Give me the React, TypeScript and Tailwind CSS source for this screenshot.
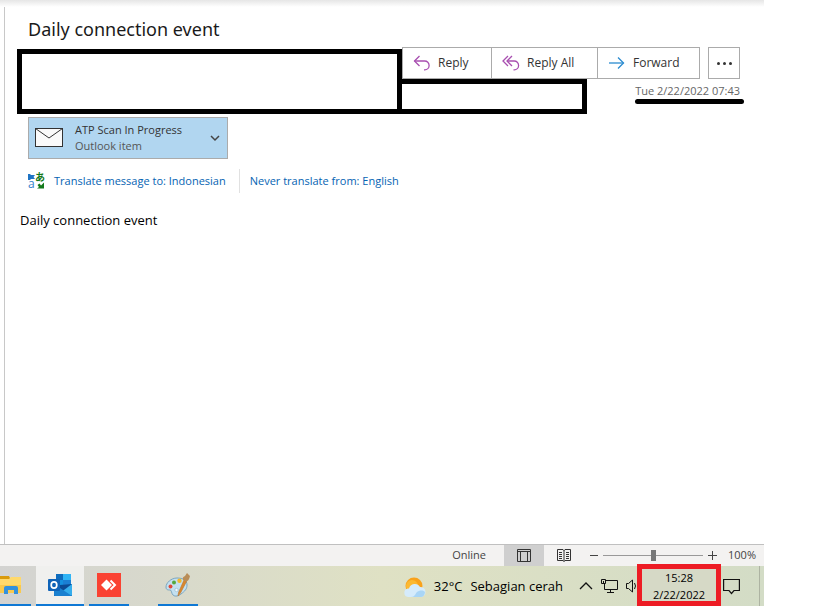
import React, { useState } from 'react';

const ReplyIcon: React.FC = () => (
  <svg width="18" height="16" viewBox="0 0 18 16" fill="none" stroke="#a84fb0" strokeWidth="1.3">
    <path d="M6.5 1 1.5 6l5 5" />
    <path d="M1.5 6h10.2a4.4 4.4 0 0 1 0 8.8h-.7" />
  </svg>
);

const ReplyAllIcon: React.FC = () => (
  <svg width="18" height="16" viewBox="0 0 18 16" fill="none" stroke="#a84fb0" strokeWidth="1.3">
    <path d="M6 1 1 6l5 5" />
    <path d="M10 1 5 6l5 5" />
    <path d="M5 6h7.2a4.2 4.2 0 0 1 0 8.8h-.7" />
  </svg>
);

const ForwardIcon: React.FC = () => (
  <svg width="18" height="16" viewBox="0 0 18 16" fill="none" stroke="#2b8bd0" strokeWidth="1.3">
    <path d="M1 8h14.5" />
    <path d="M10 2.5 15.5 8 10 13.5" />
  </svg>
);

const MailIcon: React.FC = () => (
  <svg width="28" height="20" viewBox="0 0 28 20" fill="#fafafa" stroke="#333" strokeWidth="1">
    <rect x=".5" y=".5" width="27" height="18" />
    <path d="M.5.5 14 10 27.5.5" fill="none" />
  </svg>
);

const TranslateIcon: React.FC = () => (
  <svg width="18" height="18" viewBox="0 0 18 18" className="overflow-visible">
    <path d="M0 2h2l1 1h4L5.500 5 7 7H3L2 8H0z" fill="#1f74c4" />
    <path d="M16 10.500v6H9l2-1.500-1.500-2 2-1.500 1.500 2z" fill="#13791b" />
    <text x="0" y="16" fontSize="12" fill="#2f7fc9" className="font-['Open_Sans',sans-serif]">a</text>
    <text x="7" y="9" fontSize="10" fontWeight="700" fill="#13791b" className="font-['Noto_Sans_CJK_JP',sans-serif]">あ</text>
  </svg>
);

const ReadingLayoutIcon: React.FC = () => (
  <svg width="14" height="13" viewBox="0 0 14 13" fill="none" stroke="#333">
    <path d="M.5.5h13v12H.5zM.5 2.5h13M3.5 2.5v10M10.5 2.5v10" />
  </svg>
);

const BookIcon: React.FC = () => (
  <svg width="14" height="13" viewBox="0 0 14 13" fill="none" stroke="#333">
    <path d="M.5.5H6l1 1 1-1h5.5v11H8l-1 1-1-1H.5zM7 1v11.5" />
    <path d="M2 3.5h3M2 5.5h3M2 7.5h3M2 9.5h3M9 3.5h3M9 5.5h3M9 7.5h3M9 9.5h3" />
  </svg>
);

const ExplorerIcon: React.FC = () => (
  <svg width="24" height="22" viewBox="0 0 24 22">
    <path d="M0 2h9l1 2v3H0z" fill="#d99a0b" />
    <path d="M0 5h9l2-2h10v16H0z" fill="#ffd96c" />
    <path d="M0 11h21v8H0z" fill="#f9c94e" />
    <path d="M4 20v-6q0-2 2-2h10q2 0 2 2v6h-4v-4H8v4z" fill="#3391dd" />
  </svg>
);

const OutlookIcon: React.FC = () => (
  <svg width="24" height="22" viewBox="0 0 24 22">
    <path d="M8 0h15v11H8z" fill="#1490df" />
    <path d="M8 0h7v6H8z" fill="#0f6cbd" />
    <path d="M15 0h8v6h-8z" fill="#30b4f5" />
    <path d="M15 6h8v6h-8z" fill="#1b7fd3" />
    <path d="M6 11h6l12-1v12H6z" fill="#0b4a94" />
    <path d="M24 10v11q0 1-1 1H8z" fill="#35adec" />
    <path d="m6 10 18 12H7q-1 0-1-1z" fill="#1a80d0" />
    <rect y="5" width="12" height="12" rx="1" fill="#0f63b8" />
    <ellipse cx="6" cy="11" rx="2.8" ry="3.2" fill="none" stroke="#fff" strokeWidth="1.7" />
  </svg>
);

const AnyDeskIcon: React.FC = () => (
  <svg width="24" height="24" viewBox="0 0 24 24">
    <path d="M0 0h24v24H0z" fill="#fa4232" />
    <path d="m9.5 6.5 5.5 5.5-5.5 5.5L4 12z" fill="#fff" />
    <path d="m13.5 7.5 4.5 4.5-4.5 4.5" fill="none" stroke="#fff" strokeWidth="2" />
  </svg>
);

const PaintIcon: React.FC = () => (
  <svg width="26" height="26" viewBox="0 0 26 26">
    <path d="M12 6C6 6 1 11 1 15c0 3 2 3 4 3s1 3 3 5 6 1 8-1c4-3 6-5 6-9 0-5-4-7-10-7z" fill="#c3e0f0" stroke="#7ba6c0" />
    <circle cx="5.5" cy="14.5" r="2" fill="#e04b3a" />
    <circle cx="9" cy="10.5" r="2" fill="#55a83e" />
    <circle cx="14.5" cy="8.8" r="2.2" fill="#f0b92e" />
    <circle cx="11.5" cy="18" r="1.7" fill="#f4fafd" stroke="#8db4ca" strokeWidth=".6" />
    <path d="m19 8 2.5 1.500L15.500 21 13 24l.5-3.500z" fill="#d9872e" stroke="#b9732a" strokeWidth=".6" />
    <path d="M18 8q-1-3 2-4l2-3 3 3q-1 5-4 5.500z" fill="#b98d58" />
  </svg>
);

const WeatherIcon: React.FC = () => (
  <svg width="23" height="22" viewBox="0 0 23 22">
    <circle cx="11" cy="10" r="8.5" fill="#f9a21b" />
    <circle cx="9" cy="10" r="6" fill="#fcb931" />
    <path d="M5 21a4.3 4.3 0 0 1 0-8.500h1A6 6 0 0 1 17 11a5 5 0 0 1 1 10z" fill="#d5ebfb" />
    <path d="M8 21c5 0 4-5 8-6 3-1 5 0 6 1 0 3-2 5-4 5z" fill="#a9d5f6" />
  </svg>
);

const App: React.FC = () => {
  const [zoom, setZoom] = useState(50);

  return (
    <div className="min-h-screen bg-white pr-[55px] font-['Open_Sans',sans-serif] text-[#333]">
      <div className="flex min-h-screen flex-col">
        <div className="h-[7px] bg-linear-to-b from-[#e6e6e6] to-white" />

        {/* Message */}
        <main className="ml-1 flex-1 border-l border-[#c8c8c8]">
          <h1 className="flex h-10 items-center pl-[23px] pt-1 text-[18px] text-[#1a1a1a] font-['Noto_Sans',sans-serif]">
            Daily connection event
          </h1>

          <div className="flex items-end pl-3 pr-5">
            <div className="h-[65px] flex-1 border-5 border-black" />
            <div className="w-[342px]">
              <div className="flex h-8 pr-1 text-[12px]">
                <button className="flex w-[90px] items-center gap-[7px] border border-[#ababab] pl-[10px]">
                  <ReplyIcon />
                  Reply
                </button>
                <button className="-ml-px flex w-[107px] items-center gap-[7px] border border-[#ababab] pl-[10px]">
                  <ReplyAllIcon />
                  Reply All
                </button>
                <button className="-ml-px flex w-[103px] items-center gap-[7px] border border-[#ababab] pl-[10px]">
                  <ForwardIcon />
                  Forward
                </button>
                <button aria-label="More actions" className="ml-auto flex w-8 items-center justify-center gap-[3px] border border-[#ababab]">
                  <span className="size-[3px] rounded-full bg-[#333]" />
                  <span className="size-[3px] rounded-full bg-[#333]" />
                  <span className="size-[3px] rounded-full bg-[#333]" />
                </button>
              </div>
              <div className="flex justify-between">
                <div className="h-[35px] w-[185px] border-5 border-l-0 border-black" />
                <div className="w-[109px]">
                  <p className="h-5 whitespace-nowrap pr-1 text-right text-[11px] leading-6 text-[#666]">Tue 2/22/2022 07:43</p>
                  <div className="h-[5px] rounded-full bg-black" />
                </div>
              </div>
            </div>
          </div>

          <button className="ml-[23px] mt-[3px] flex h-[42px] w-[200px] items-center border border-[#ababab] bg-[#b1d6f0] pl-[6px] pr-[7px] text-left text-[11px] leading-4">
            <MailIcon />
            <span className="ml-3 flex-1">
              <span className="block text-[#333]">ATP Scan In Progress</span>
              <span className="block text-[#555]">Outlook item</span>
            </span>
            <svg width="10" height="7" viewBox="0 0 10 7" fill="none" stroke="#444" strokeWidth="1.5">
              <path d="m1 1 4 4 4-4" />
            </svg>
          </button>

          <div className="ml-[23px] mt-[10px] flex h-6 items-center whitespace-nowrap text-[11px] text-[#0563b3]">
            <TranslateIcon />
            <a href="#" className="ml-2">Translate message to: Indonesian</a>
            <span className="ml-[13px] h-6 border-l border-[#e1e1e1]" />
            <a href="#" className="ml-[10px]">Never translate from: English</a>
          </div>

          <p className="ml-[15px] mt-[17px] text-[13px] leading-5 text-black">Daily connection event</p>
        </main>

        {/* Status bar */}
        <footer className="flex h-[22px] items-center justify-end border-t border-[#c0c0c0] bg-[#f3f2f1] pr-2 text-[11px] text-[#444]">
          <span className="mr-[18px]">Online</span>
          <button aria-label="Normal view" className="flex h-full w-10 items-center justify-center bg-[#cfcfcf]">
            <ReadingLayoutIcon />
          </button>
          <button aria-label="Reading view" className="flex h-full w-10 items-center justify-center">
            <BookIcon />
          </button>
          <button aria-label="Zoom out" className="ml-[5px] w-[10px]" onClick={() => setZoom(Math.max(0, zoom - 5))}>
            <span className="mx-auto block h-px w-2 bg-[#444]" />
          </button>
          <input
            type="range"
            aria-label="Zoom"
            value={zoom}
            onChange={(e) => setZoom(Number(e.target.value))}
            className="mx-1 h-3 w-[100px] appearance-none bg-[linear-gradient(#999,#999)] bg-[length:100%_1px] bg-center bg-no-repeat [&::-webkit-slider-thumb]:h-[11px] [&::-webkit-slider-thumb]:w-[5px] [&::-webkit-slider-thumb]:appearance-none [&::-webkit-slider-thumb]:bg-[#777]"
          />
          <button aria-label="Zoom in" className="w-[10px]" onClick={() => setZoom(Math.min(100, zoom + 5))}>
            <svg width="9" height="9" viewBox="0 0 9 9" stroke="#444" className="mx-auto">
              <path d="M4.5 0v9M0 4.5h9" />
            </svg>
          </button>
          <span className="ml-[11px] w-7 text-right">100%</span>
        </footer>

        {/* Taskbar */}
        <nav className="flex h-10 bg-linear-to-r from-[#d3d3d1] via-[#dfe1c4] to-[#d3dcc6] text-black">
          <button aria-label="File Explorer" className="mr-[5px] flex w-[31px] items-center border-b-2 border-[#0f78d4]">
            <ExplorerIcon />
          </button>
          <button aria-label="Outlook" className="mr-[5px] flex w-12 items-center justify-center border-b-2 border-[#0f78d4] bg-[#f0f0ee]">
            <OutlookIcon />
          </button>
          <button aria-label="AnyDesk" className="mr-[29px] flex w-10 items-center justify-center border-b-2 border-[#0f78d4]">
            <AnyDeskIcon />
          </button>
          <button aria-label="Paint" className="flex w-10 items-center justify-center border-b-2 border-[#0f78d4]">
            <PaintIcon />
          </button>

          <div className="ml-auto flex items-center">
            <button className="flex items-center whitespace-nowrap pt-[2px] text-[13px]">
              <WeatherIcon />
              <span className="ml-2">32°C</span>
              <span className="ml-2">Sebagian cerah</span>
            </button>
            <button aria-label="Show hidden icons" className="ml-4">
              <svg width="14" height="8" viewBox="0 0 14 8" fill="none" stroke="#111" strokeWidth="1.3">
                <path d="m1 7 6-6 6 6" />
              </svg>
            </button>
            <svg width="17" height="14" viewBox="0 0 17 14" fill="none" stroke="#111" className="ml-2">
              <path d="M4.5 1.5h12v9h-13v-6M9.500 10.500v3M6 13.500h7M.5.5h4v4h-4zM2.500 2v2" />
            </svg>
            <svg width="11" height="14" viewBox="0 0 11 14" fill="none" stroke="#111" className="ml-2">
              <path d="M.5 4.500h2l4-3.500v12l-4-3.500h-2zM8.500 4q2 3 0 6" />
            </svg>
            <div className="-mt-[2px] flex h-[42px] w-[84px] flex-col border-5 border-[#ed1c24] bg-[#d6d9c6] text-center text-[11px] leading-[17px]">
              <span>15:28</span>
              <span>2/22/2022</span>
            </div>
            <button aria-label="Notifications" className="ml-[2px] mr-[19px]">
              <svg width="17" height="17" viewBox="0 0 17 17" fill="none" stroke="#111" strokeWidth="1.2">
                <path d="M.6 1.5h15.800v11H11l-2.500 3-2.500-3H.6z" />
              </svg>
            </button>
          </div>
          <span className="w-[5px] border-l border-[#adb3a2]" />
        </nav>
      </div>
    </div>
  );
};

export default App;
